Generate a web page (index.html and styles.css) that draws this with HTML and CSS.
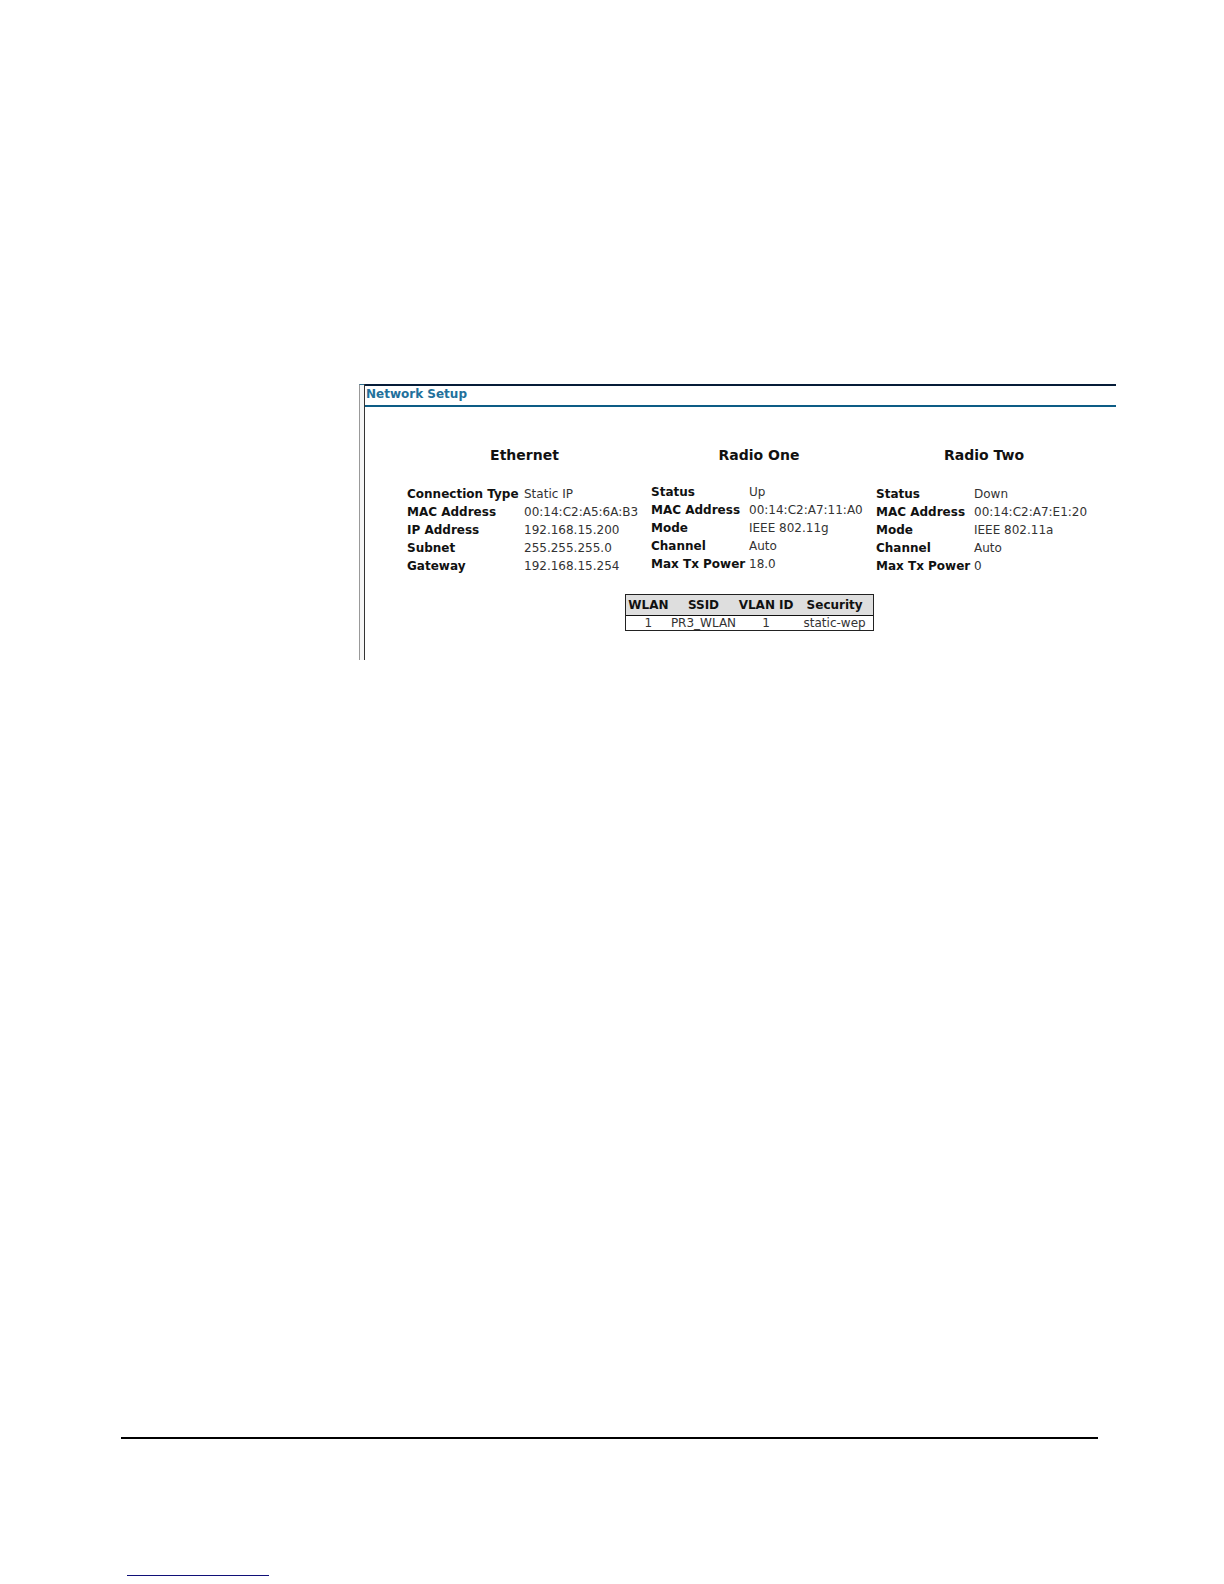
FILE: index.html
```html
<!DOCTYPE html>
<html lang="en">
<head>
<meta charset="utf-8">
<title>Network Setup</title>
<link rel="stylesheet" href="styles.css">
</head>
<body>
<main class="frame">
  <div class="gutter"></div>
  <section class="panel">
    <h1 class="panel-title">Network Setup</h1>
    <div class="content">
      <div class="groups">
        <section class="group">
          <h2>Ethernet</h2>
          <table class="facts wide">
            <tr><th scope="row">Connection Type</th><td>Static IP</td></tr>
            <tr><th scope="row">MAC Address</th><td>00:14:C2:A5:6A:B3</td></tr>
            <tr><th scope="row">IP Address</th><td>192.168.15.200</td></tr>
            <tr><th scope="row">Subnet</th><td>255.255.255.0</td></tr>
            <tr><th scope="row">Gateway</th><td>192.168.15.254</td></tr>
          </table>
        </section>
        <section class="group compact">
          <h2>Radio One</h2>
          <table class="facts">
            <tr><th scope="row">Status</th><td>Up</td></tr>
            <tr><th scope="row">MAC Address</th><td>00:14:C2:A7:11:A0</td></tr>
            <tr><th scope="row">Mode</th><td>IEEE 802.11g</td></tr>
            <tr><th scope="row">Channel</th><td>Auto</td></tr>
            <tr><th scope="row">Max Tx Power</th><td>18.0</td></tr>
          </table>
        </section>
        <section class="group">
          <h2>Radio Two</h2>
          <table class="facts">
            <tr><th scope="row">Status</th><td>Down</td></tr>
            <tr><th scope="row">MAC Address</th><td>00:14:C2:A7:E1:20</td></tr>
            <tr><th scope="row">Mode</th><td>IEEE 802.11a</td></tr>
            <tr><th scope="row">Channel</th><td>Auto</td></tr>
            <tr><th scope="row">Max Tx Power</th><td>0</td></tr>
          </table>
        </section>
      </div>
      <table class="wlans">
        <colgroup><col class="c-wlan"><col class="c-ssid"><col class="c-vlan"><col class="c-sec"></colgroup>
        <thead>
          <tr><th scope="col">WLAN</th><th scope="col">SSID</th><th scope="col">VLAN ID</th><th scope="col">Security</th></tr>
        </thead>
        <tbody>
          <tr><td>1</td><td>PR3_WLAN</td><td>1</td><td>static-wep</td></tr>
        </tbody>
      </table>
    </div>
  </section>
</main>
<footer class="footer">
  <div class="footer-rule"></div>
</footer>
</body>
</html>
```
FILE: styles.css
```css
* {
  box-sizing: border-box;
}

body {
  margin: 0;
  min-height: 100vh;
  display: flex;
  flex-direction: column;
  background: #fff;
  color: #111;
  font: 12px/18px "DejaVu Sans", Verdana, sans-serif;
}

h1,
h2 {
  margin: 0;
}

table {
  border-collapse: separate;
  border-spacing: 0;
}

th,
td {
  padding: 0;
  white-space: nowrap;
}

.frame {
  display: flex;
  margin: 384px 108px 0 359px;
}

.gutter {
  width: 5px;
  border-top: 1px solid #2a6f92;
  border-left: 1px solid #999;
  background: #f6f6f6;
}

.panel {
  flex: 1;
  border-left: 1px solid #333;
}

.panel-title {
  padding: 0 0 2px 1px;
  border-top: 2px solid #061c38;
  border-bottom: 2px solid #0d5c85;
  color: #22709c;
  font-size: 12px;
  line-height: 17px;
}

.content {
  display: flex;
  flex-direction: column;
  align-items: center;
  padding: 38px 24px 29px 42px;
}

.groups {
  display: flex;
  gap: 9px;
}

.group h2 {
  margin-bottom: 20px;
  font-size: 14px;
  line-height: 20px;
  text-align: center;
}

.group.compact h2 {
  margin-bottom: 18px;
}

.facts th {
  width: 98px;
  text-align: left;
}

.facts td {
  width: 118px;
  color: #333;
}

.facts.wide th {
  width: 117px;
}

.wlans {
  margin-top: 19px;
  border: 1px solid #222;
  text-align: center;
}

.wlans th {
  height: 21px;
  border-bottom: 1px solid #111;
  background: #dedede;
}

.wlans td {
  color: #333;
  line-height: 14px;
}

.c-wlan {
  width: 45px;
}

.c-ssid {
  width: 65px;
}

.c-vlan {
  width: 60px;
}

.c-sec {
  width: 77px;
}

.footer {
  margin: auto 126px 0 121px;
  padding: 0 6px 8px;
  border-top: 2px solid #000;
}

.footer-rule {
  width: 142px;
  margin-top: 136px;
  border-top: 1px solid #101078;
}
```
